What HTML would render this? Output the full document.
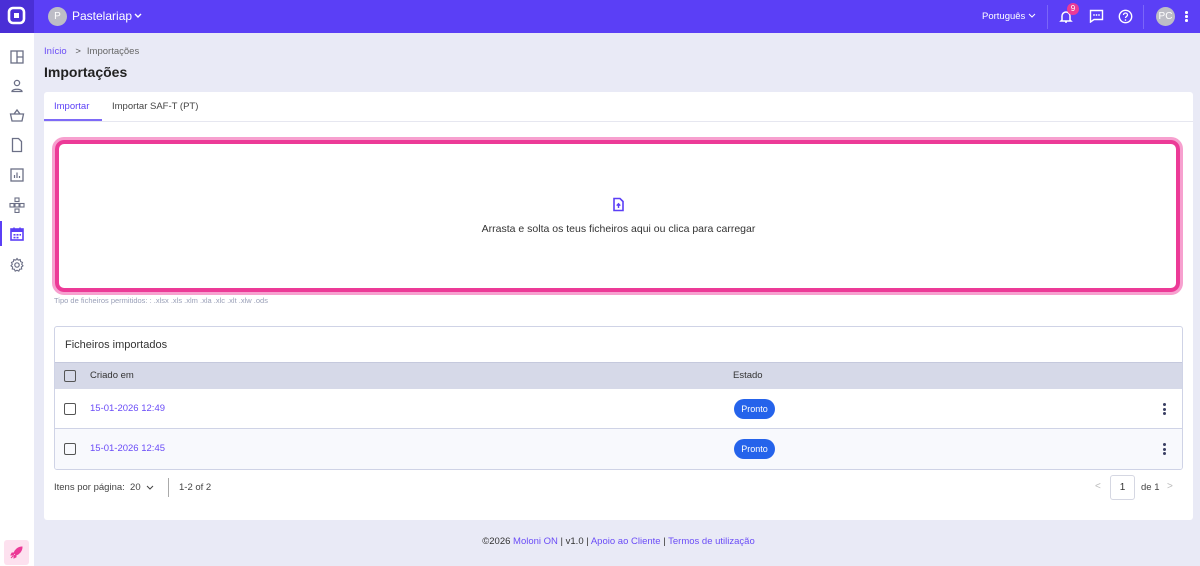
<!DOCTYPE html>
<html><head><meta charset="utf-8"><style>
*{box-sizing:border-box;margin:0;padding:0}
body{width:1200px;height:566px;overflow:hidden;font-family:"Liberation Sans",sans-serif;background:#e9eaf6;position:relative;color:#333}
.abs{position:absolute}
.top{left:0;top:0;width:1200px;height:33px;background:#5b3ff6}
.logo{left:0;top:0;width:34px;height:33px;background:#4a2fd6}
.side{left:0;top:33px;width:34px;height:533px;background:#fff}
.ic{position:absolute;left:9px;width:16px;height:16px}
.card{left:44px;top:92px;width:1149px;height:428px;background:#fff;border-radius:3px}
.drop{left:52px;top:137px;width:1131px;height:158px;border:3px solid #f7a0cf;border-radius:12px}
.drop2{position:absolute;inset:0;border:4px solid #ec3a97;border-radius:9px;background:#fff}
.tbl{left:54px;top:326px;width:1129px;height:144px;border:1px solid #cfd3e6;border-radius:3px;background:#fff;overflow:hidden}
.cb{position:absolute;left:9px;width:12px;height:12px;border:1.5px solid #555;border-radius:2px}
.badge{position:absolute;left:679px;width:41px;height:20px;border-radius:10px;background:#2563eb;color:#fff;font-size:9px;text-align:center;line-height:20px}
.dots{position:absolute;left:1108px;width:3px}
.dots i{display:block;width:3px;height:3px;background:#3a3f63;border-radius:50%;margin-bottom:1.5px}
a{color:#6a4cf7;text-decoration:none}
</style></head><body>
<div class="abs top"></div>
<div class="abs logo"><svg width="34" height="33"><rect x="9" y="8" width="15" height="15" rx="4" fill="none" stroke="#fff" stroke-width="2.6"/><rect x="14" y="13" width="5" height="5" fill="#fff"/></svg></div>
<div class="abs" style="left:48px;top:7px;width:19px;height:19px;border-radius:50%;background:#bdbdc6;color:#fff;font-size:10px;text-align:center;line-height:19px">P</div>
<div class="abs" style="left:72px;top:9px;color:#fff;font-size:12px">Pastelariap</div>
<svg class="abs" style="left:133px;top:12px" width="10" height="8"><path d="M2 2l3 3 3-3" fill="none" stroke="#fff" stroke-width="1.4"/></svg>
<div class="abs" style="left:982px;top:11px;color:#fff;font-size:9.5px">Português</div>
<svg class="abs" style="left:1028px;top:13px" width="8" height="6"><path d="M1 1l3 3 3-3" fill="none" stroke="#fff" stroke-width="1"/></svg>
<div class="abs" style="left:1047px;top:5px;width:1px;height:24px;background:#7b66f8"></div>
<svg class="abs" style="left:1059px;top:9px" width="14" height="15"><path d="M3 11V7a4 4 0 018 0v4l1 1H2zM6 13h2" fill="none" stroke="#fff" stroke-width="1.5"/></svg>
<div class="abs" style="left:1067px;top:3px;width:12px;height:12px;border-radius:50%;background:#ec3a97;color:#fff;font-size:8px;text-align:center;line-height:12px">9</div>
<svg class="abs" style="left:1089px;top:9px" width="15" height="14"><path d="M1.5 1.5h12v9H5l-3.5 2.5z" fill="none" stroke="#fff" stroke-width="1.4"/><circle cx="5" cy="6" r=".9" fill="#fff"/><circle cx="7.5" cy="6" r=".9" fill="#fff"/><circle cx="10" cy="6" r=".9" fill="#fff"/></svg>
<svg class="abs" style="left:1118px;top:9px" width="15" height="15"><circle cx="7.5" cy="7.5" r="6.2" fill="none" stroke="#fff" stroke-width="1.4"/><path d="M5.5 6a2 2 0 114 0c0 1.3-2 1.5-2 3" fill="none" stroke="#fff" stroke-width="1.3"/><circle cx="7.5" cy="11" r=".8" fill="#fff"/></svg>
<div class="abs" style="left:1143px;top:5px;width:1px;height:24px;background:#7b66f8"></div>
<div class="abs" style="left:1156px;top:7px;width:19px;height:19px;border-radius:50%;background:#bdbdc6;color:#fff;font-size:10px;text-align:center;line-height:19px">PC</div>
<div class="abs" style="left:1185px;top:11px;width:3px"><i style="display:block;width:2.5px;height:2.5px;background:#fff;border-radius:50%;margin-bottom:1.5px"></i><i style="display:block;width:2.5px;height:2.5px;background:#fff;border-radius:50%;margin-bottom:1.5px"></i><i style="display:block;width:2.5px;height:2.5px;background:#fff;border-radius:50%"></i></div>

<div class="abs side">
<svg class="ic" style="top:16px" viewBox="0 0 16 16"><rect x="2" y="2" width="12" height="12" fill="none" stroke="#6b6f86" stroke-width="1.3"/><path d="M8 2v12M8 8h6" stroke="#6b6f86" stroke-width="1.3"/></svg>
<svg class="ic" style="top:45px" viewBox="0 0 16 16"><circle cx="8" cy="5" r="2.6" fill="none" stroke="#6b6f86" stroke-width="1.3"/><path d="M3 13.5c0-3 10-3 10 0z" fill="none" stroke="#6b6f86" stroke-width="1.3"/></svg>
<svg class="ic" style="top:74px" viewBox="0 0 16 16"><path d="M1.5 7h13l-1.5 7h-10zM5 7l3-4 3 4" fill="none" stroke="#6b6f86" stroke-width="1.3"/></svg>
<svg class="ic" style="top:104px" viewBox="0 0 16 16"><path d="M3.5 1.5h6l3 3v10h-9z" fill="none" stroke="#6b6f86" stroke-width="1.3"/></svg>
<svg class="ic" style="top:134px" viewBox="0 0 16 16"><rect x="2" y="2" width="12" height="12" fill="none" stroke="#6b6f86" stroke-width="1.3"/><path d="M5.5 11V8M8 11V5.5M10.5 11V9" stroke="#6b6f86" stroke-width="1.2"/></svg>
<svg class="ic" style="top:164px" viewBox="0 0 16 16"><g fill="none" stroke="#6b6f86" stroke-width="1.1"><rect x="6" y="1" width="4" height="3.5"/><rect x="1" y="6.5" width="4" height="3.5"/><rect x="6" y="6.5" width="4" height="3.5"/><rect x="11" y="6.5" width="4" height="3.5"/><rect x="6" y="12" width="4" height="3.5"/></g></svg>
<div class="abs" style="left:0;top:188px;width:2px;height:25px;background:#5b3ff6"></div>
<svg class="ic" style="top:193px" viewBox="0 0 16 16"><rect x="2" y="3" width="12" height="11" fill="none" stroke="#5b3ff6" stroke-width="1.6"/><rect x="2" y="3" width="12" height="3" fill="#5b3ff6"/><path d="M5 1.5v3M11 1.5v3" stroke="#5b3ff6" stroke-width="1.5"/><g fill="#5b3ff6"><rect x="4.5" y="8" width="2" height="1.6"/><rect x="7.5" y="8" width="2" height="1.6"/><rect x="10.5" y="8" width="1.5" height="1.6"/><rect x="4.5" y="10.8" width="2" height="1.6"/><rect x="7.5" y="10.8" width="2" height="1.6"/></g></svg>
<svg class="ic" style="top:224px" viewBox="0 0 16 16"><circle cx="8" cy="8" r="2.2" fill="none" stroke="#6b6f86" stroke-width="1.2"/><path d="M8 1.5l1.2 1.6 2-.5.4 2 1.9.8-.8 1.9 1.3 1.5-1.6 1.2.3 2-2 .2-.9 1.9L8 13.2l-1.8.9-.9-1.9-2-.2.3-2L2 8.8l1.3-1.5-.8-1.9 1.9-.8.4-2 2 .5z" fill="none" stroke="#6b6f86" stroke-width="1.1"/></svg>
<div class="abs" style="left:4px;top:507px;width:25px;height:25px;border-radius:3px;background:#fde1ef"></div>
<svg class="abs" style="left:9px;top:512px" width="15" height="15" viewBox="0 0 15 15"><path d="M13 2c-4 0-7 3-8 6l2 2c3-1 6-4 6-8zM5 8l-2 0-1 2 3 0M7 10l0 2-2 1 0-3M4 11l-2 2" fill="#ec3a97" stroke="#ec3a97" stroke-width="1"/></svg>
</div>

<div class="abs" style="left:44px;top:46px;font-size:9.5px"><a>Início</a> <span style="color:#555;margin:0 6px">&gt;</span><span style="color:#666">Importações</span></div>
<div class="abs" style="left:44px;top:64px;font-size:14px;font-weight:bold;color:#222">Importações</div>

<div class="abs card"></div>
<div class="abs" style="left:54px;top:101px;font-size:9.5px;color:#5b3ff6">Importar</div>
<div class="abs" style="left:112px;top:101px;font-size:9.5px;color:#444">Importar SAF-T (PT)</div>
<div class="abs" style="left:44px;top:119px;width:58px;height:2px;background:#7e6af7"></div>
<div class="abs" style="left:44px;top:121px;width:1149px;height:1px;background:#e6e7f0"></div>

<div class="abs drop"><div class="drop2"></div></div>
<svg class="abs" style="left:612px;top:197px" width="13" height="15" viewBox="0 0 13 15"><path d="M2 1.5h6l3 3v9H2z" fill="none" stroke="#5b3ff6" stroke-width="1.6"/><path d="M6.5 11V7M4.7 8.6l1.8-1.8 1.8 1.8" fill="none" stroke="#5b3ff6" stroke-width="1.4"/></svg>
<div class="abs" style="left:0;top:223px;width:1237px;text-align:center;font-size:10.5px;color:#333">Arrasta e solta os teus ficheiros aqui ou clica para carregar</div>
<div class="abs" style="left:54px;top:296px;font-size:7.5px;color:#9aa0b8">Tipo de ficheiros permitidos: : .xlsx .xls .xlm .xla .xlc .xlt .xlw .ods</div>

<div class="abs tbl">
<div class="abs" style="left:10px;top:12px;font-size:11px;color:#333">Ficheiros importados</div>
<div class="abs" style="left:0;top:35px;width:1129px;height:27px;background:#d6d9e8;border-top:1px solid #c5c9dd"></div>
<div class="cb" style="top:43px"></div>
<div class="abs" style="left:35px;top:43px;font-size:9.5px;color:#333">Criado em</div>
<div class="abs" style="left:678px;top:43px;font-size:9.5px;color:#333">Estado</div>
<div class="abs" style="left:0;top:101px;width:1129px;height:1px;background:#cfd3e6"></div>
<div class="abs" style="left:0;top:102px;width:1129px;height:42px;background:#f8f9fd"></div>
<div class="cb" style="top:76px"></div>
<div class="abs" style="left:35px;top:76px;font-size:9.5px;color:#6a4cf7">15-01-2026 12:49</div>
<div class="badge" style="top:72px">Pronto</div>
<div class="dots" style="top:76px"><i></i><i></i><i></i></div>
<div class="cb" style="top:116px"></div>
<div class="abs" style="left:35px;top:116px;font-size:9.5px;color:#6a4cf7">15-01-2026 12:45</div>
<div class="badge" style="top:112px">Pronto</div>
<div class="dots" style="top:116px"><i></i><i></i><i></i></div>
</div>

<div class="abs" style="left:54px;top:482px;font-size:9.5px;color:#444">Itens por página: &nbsp;20</div>
<svg class="abs" style="left:146px;top:485px" width="8" height="6"><path d="M1 1l3 3 3-3" fill="none" stroke="#444" stroke-width="1"/></svg>
<div class="abs" style="left:168px;top:478px;width:1px;height:19px;background:#aaa"></div>
<div class="abs" style="left:179px;top:482px;font-size:9.5px;color:#444">1-2 of 2</div>
<div class="abs" style="left:1095px;top:481px;font-size:10px;color:#bbb">&lt;</div>
<div class="abs" style="left:1110px;top:475px;width:25px;height:25px;border:1px solid #d5d7e2;border-radius:3px;text-align:center;line-height:23px;font-size:10px;color:#333">1</div>
<div class="abs" style="left:1141px;top:482px;font-size:9.5px;color:#444">de 1</div>
<div class="abs" style="left:1167px;top:481px;font-size:10px;color:#bbb">&gt;</div>

<div class="abs" style="left:0;top:536px;width:1237px;text-align:center;font-size:9.5px;color:#333">©2026 <a>Moloni ON</a> | v1.0 | <a>Apoio ao Cliente</a> | <a>Termos de utilização</a></div>
</body></html>
